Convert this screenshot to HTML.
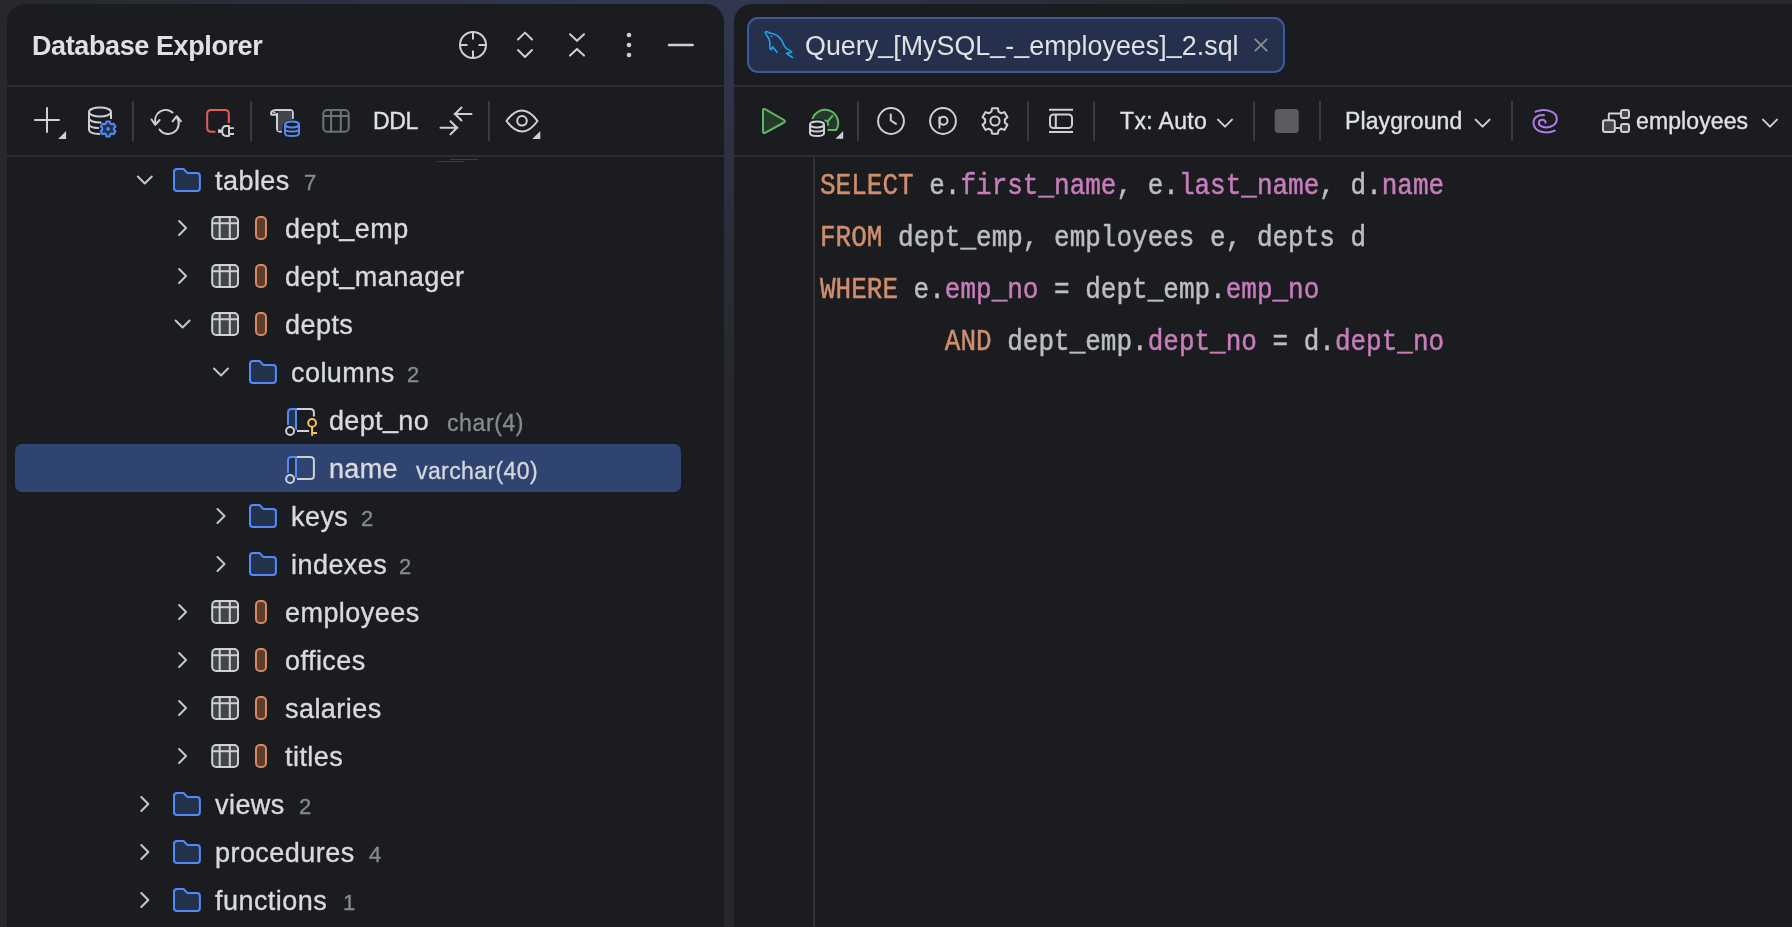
<!DOCTYPE html>
<html><head><meta charset="utf-8">
<style>
*{margin:0;padding:0;box-sizing:border-box}
html,body{width:1792px;height:927px;overflow:hidden}
body{position:relative;background:#26282b;font-family:"Liberation Sans",sans-serif;color:#dfe1e5}
.bgglow{position:absolute;left:0;top:0;width:1792px;height:927px;background:radial-gradient(ellipse 620px 420px at 640px -40px,#323a55 0%,#2e3348 35%,rgba(38,40,43,0) 100%)}
.panel{position:absolute;background:#1b1c1f}
#lp{left:7px;top:4px;width:717px;height:940px;border-radius:18px 18px 0 0}
#rp{left:734px;top:4px;width:1100px;height:940px;border-radius:18px 0 0 0}
.a{position:absolute;white-space:pre}
.hl{position:absolute;height:2px;background:#2b2d30}
svg.ov{position:absolute;left:0;top:0;overflow:visible}
.code{position:absolute;font-family:"Liberation Mono",monospace;font-size:26px;line-height:26px;white-space:pre;color:#bcbec4;transform-origin:0 100%;transform:scaleY(1.1);-webkit-text-stroke:0.45px currentColor}
.kw{color:#cf8e6d}.col{color:#c77dbb}
.a,.code{will-change:transform}
.tx{-webkit-text-stroke:0.35px currentColor}
.us{position:relative;top:-3.5px}

</style></head><body>
<div class="bgglow"></div>
<div class="panel" id="lp"></div>
<div class="panel" id="rp"></div>
<div class="a" style="left:31.7px;top:32.6px;font-weight:bold;font-size:27px;line-height:26px;color:#dfe1e5;letter-spacing:-0.4px">Database Explorer</div>
<div class="hl" style="left:7px;top:85px;width:717px"></div>
<div class="hl" style="left:7px;top:155px;width:717px"></div>
<div class="a" style="left:747px;top:17px;width:538px;height:56px;border:2px solid #3a5a9f;background:#25314c;border-radius:11px"></div>
<div class="a" style="left:805px;top:32.5px;font-size:26.8px;line-height:27px;color:#dfe1e5;letter-spacing:0.05px">Query<span class="us">_</span>[MySQL<span class="us">_</span>-<span class="us">_</span>employees]<span class="us">_</span>2.sql</div>
<div class="hl" style="left:734px;top:85px;width:1060px"></div>
<div class="hl" style="left:734px;top:155px;width:1060px"></div>
<div class="a" style="left:813px;top:157px;width:2px;height:780px;background:#2f3134"></div>
<div class="code" style="left:820px;top:175px"><span class="kw">SELECT</span> e.<span class="col">first_name</span>, e.<span class="col">last_name</span>, d.<span class="col">name</span></div>
<div class="code" style="left:820px;top:227px"><span class="kw">FROM</span> dept_emp, employees e, depts d</div>
<div class="code" style="left:820px;top:279px"><span class="kw">WHERE</span> e.<span class="col">emp_no</span> = dept_emp.<span class="col">emp_no</span></div>
<div class="code" style="left:820px;top:331px">        <span class="kw">AND</span> dept_emp.<span class="col">dept_no</span> = d.<span class="col">dept_no</span></div>

<div class="a" style="left:15px;top:444px;width:666px;height:48px;border-radius:7px;background:#2f4470"></div><div class="a tx" style="left:215px;top:168.14px;font-size:27px;line-height:27px;color:#d8dadf;font-weight:normal;letter-spacing:0.45px;font-family:"Liberation Sans",sans-serif;">tables</div><div class="a tx" style="left:285px;top:216.14px;font-size:27px;line-height:27px;color:#d8dadf;font-weight:normal;letter-spacing:0.45px;font-family:"Liberation Sans",sans-serif;">dept<span style="position:relative;top:-3.5px">_</span>emp</div><div class="a tx" style="left:285px;top:264.14px;font-size:27px;line-height:27px;color:#d8dadf;font-weight:normal;letter-spacing:0.45px;font-family:"Liberation Sans",sans-serif;">dept<span style="position:relative;top:-3.5px">_</span>manager</div><div class="a tx" style="left:285px;top:312.14px;font-size:27px;line-height:27px;color:#d8dadf;font-weight:normal;letter-spacing:0.45px;font-family:"Liberation Sans",sans-serif;">depts</div><div class="a tx" style="left:291px;top:360.14px;font-size:27px;line-height:27px;color:#d8dadf;font-weight:normal;letter-spacing:0.45px;font-family:"Liberation Sans",sans-serif;">columns</div><div class="a tx" style="left:329px;top:408.14px;font-size:27px;line-height:27px;color:#d8dadf;font-weight:normal;letter-spacing:0.35px;font-family:"Liberation Sans",sans-serif;">dept<span style="position:relative;top:-3.5px">_</span>no</div><div class="a tx" style="left:329px;top:456.14px;font-size:27px;line-height:27px;color:#d8dadf;font-weight:normal;letter-spacing:0.35px;font-family:"Liberation Sans",sans-serif;">name</div><div class="a tx" style="left:291px;top:504.14px;font-size:27px;line-height:27px;color:#d8dadf;font-weight:normal;letter-spacing:0.45px;font-family:"Liberation Sans",sans-serif;">keys</div><div class="a tx" style="left:291px;top:552.14px;font-size:27px;line-height:27px;color:#d8dadf;font-weight:normal;letter-spacing:0.45px;font-family:"Liberation Sans",sans-serif;">indexes</div><div class="a tx" style="left:285px;top:600.14px;font-size:27px;line-height:27px;color:#d8dadf;font-weight:normal;letter-spacing:0.45px;font-family:"Liberation Sans",sans-serif;">employees</div><div class="a tx" style="left:285px;top:648.14px;font-size:27px;line-height:27px;color:#d8dadf;font-weight:normal;letter-spacing:0.45px;font-family:"Liberation Sans",sans-serif;">offices</div><div class="a tx" style="left:285px;top:696.14px;font-size:27px;line-height:27px;color:#d8dadf;font-weight:normal;letter-spacing:0.45px;font-family:"Liberation Sans",sans-serif;">salaries</div><div class="a tx" style="left:285px;top:744.14px;font-size:27px;line-height:27px;color:#d8dadf;font-weight:normal;letter-spacing:0.45px;font-family:"Liberation Sans",sans-serif;">titles</div><div class="a tx" style="left:215px;top:792.14px;font-size:27px;line-height:27px;color:#d8dadf;font-weight:normal;letter-spacing:0.45px;font-family:"Liberation Sans",sans-serif;">views</div><div class="a tx" style="left:215px;top:840.14px;font-size:27px;line-height:27px;color:#d8dadf;font-weight:normal;letter-spacing:0.45px;font-family:"Liberation Sans",sans-serif;">procedures</div><div class="a tx" style="left:215px;top:888.14px;font-size:27px;line-height:27px;color:#d8dadf;font-weight:normal;letter-spacing:0.45px;font-family:"Liberation Sans",sans-serif;">functions</div><div class="a tx" style="left:303.5px;top:172.37px;font-size:22px;line-height:22px;color:#868a91;font-weight:normal;letter-spacing:0.0px;font-family:"Liberation Sans",sans-serif;">7</div><div class="a tx" style="left:407px;top:364.37px;font-size:22px;line-height:22px;color:#868a91;font-weight:normal;letter-spacing:0.0px;font-family:"Liberation Sans",sans-serif;">2</div><div class="a tx" style="left:361px;top:508.37px;font-size:22px;line-height:22px;color:#868a91;font-weight:normal;letter-spacing:0.0px;font-family:"Liberation Sans",sans-serif;">2</div><div class="a tx" style="left:399px;top:556.37px;font-size:22px;line-height:22px;color:#868a91;font-weight:normal;letter-spacing:0.0px;font-family:"Liberation Sans",sans-serif;">2</div><div class="a tx" style="left:299px;top:796.37px;font-size:22px;line-height:22px;color:#868a91;font-weight:normal;letter-spacing:0.0px;font-family:"Liberation Sans",sans-serif;">2</div><div class="a tx" style="left:368.5px;top:844.37px;font-size:22px;line-height:22px;color:#868a91;font-weight:normal;letter-spacing:0.0px;font-family:"Liberation Sans",sans-serif;">4</div><div class="a tx" style="left:342.5px;top:892.37px;font-size:22px;line-height:22px;color:#868a91;font-weight:normal;letter-spacing:0.0px;font-family:"Liberation Sans",sans-serif;">1</div><div class="a tx" style="left:447px;top:411.53px;font-size:23px;line-height:23px;color:#868a91;font-weight:normal;letter-spacing:0.6px;font-family:"Liberation Sans",sans-serif;">char(4)</div><div class="a tx" style="left:416px;top:459.53px;font-size:23px;line-height:23px;color:#d3d6dc;font-weight:normal;letter-spacing:0.4px;font-family:"Liberation Sans",sans-serif;">varchar(40)</div><div class="a" style="left:450px;top:159px;width:28px;height:1px;background:#3a3c40"></div><div class="a" style="left:437px;top:161px;width:28px;height:1px;background:#37393d"></div><div class="a tx" style="left:373.3px;top:110.03px;font-size:23px;line-height:23px;color:#dfe1e5;font-weight:normal;letter-spacing:-0.4px;font-family:"Liberation Sans",sans-serif;">DDL</div><div class="a tx" style="left:1119.5px;top:110.13px;font-size:23px;line-height:23px;color:#dfe1e5;font-weight:normal;letter-spacing:0.35px;font-family:"Liberation Sans",sans-serif;">Tx: Auto</div><div class="a tx" style="left:1345px;top:110.13px;font-size:23px;line-height:23px;color:#dfe1e5;font-weight:normal;letter-spacing:0.1px;font-family:"Liberation Sans",sans-serif;">Playground</div><div class="a tx" style="left:1636px;top:109.53px;font-size:23px;line-height:23px;color:#dfe1e5;font-weight:normal;letter-spacing:0.1px;font-family:"Liberation Sans",sans-serif;">employees</div>
<svg class="ov" width="1792" height="927" viewBox="0 0 1792 927">
<path d="M137.8,176.5 L144.8,183.5 L151.8,176.5" fill="none" stroke="#c3c6cc" stroke-width="2" stroke-linecap="round" stroke-linejoin="round"/><path transform="translate(173,168)" d="M4,1 H10.6 L14.3,4.9 H24 Q26.9,4.9 26.9,7.8 V20 Q26.9,22.9 24,22.9 H4 Q1,22.9 1,20 V4 Q1,1 4,1 Z" fill="#25324d" stroke="#548af7" stroke-width="2" stroke-linejoin="round"/><path d="M179.1,221 L186.1,228 L179.1,235" fill="none" stroke="#c3c6cc" stroke-width="2" stroke-linecap="round" stroke-linejoin="round"/><g transform="translate(211,216)"><rect x="1.2" y="1" width="25.8" height="21.9" rx="4" fill="#43454a" stroke="#ced0d6" stroke-width="2"/><path d="M1.2,7.2 H27 M8.7,1 V22.9 M18.8,1 V22.9" stroke="#ced0d6" stroke-width="2" fill="none"/></g><rect x="256" y="217" width="10" height="22" rx="4" fill="#5c3e31" stroke="#dc8858" stroke-width="2"/><path d="M179.1,269 L186.1,276 L179.1,283" fill="none" stroke="#c3c6cc" stroke-width="2" stroke-linecap="round" stroke-linejoin="round"/><g transform="translate(211,264)"><rect x="1.2" y="1" width="25.8" height="21.9" rx="4" fill="#43454a" stroke="#ced0d6" stroke-width="2"/><path d="M1.2,7.2 H27 M8.7,1 V22.9 M18.8,1 V22.9" stroke="#ced0d6" stroke-width="2" fill="none"/></g><rect x="256" y="265" width="10" height="22" rx="4" fill="#5c3e31" stroke="#dc8858" stroke-width="2"/><path d="M175.6,320.5 L182.6,327.5 L189.6,320.5" fill="none" stroke="#c3c6cc" stroke-width="2" stroke-linecap="round" stroke-linejoin="round"/><g transform="translate(211,312)"><rect x="1.2" y="1" width="25.8" height="21.9" rx="4" fill="#43454a" stroke="#ced0d6" stroke-width="2"/><path d="M1.2,7.2 H27 M8.7,1 V22.9 M18.8,1 V22.9" stroke="#ced0d6" stroke-width="2" fill="none"/></g><rect x="256" y="313" width="10" height="22" rx="4" fill="#5c3e31" stroke="#dc8858" stroke-width="2"/><path d="M214,368.5 L221,375.5 L228,368.5" fill="none" stroke="#c3c6cc" stroke-width="2" stroke-linecap="round" stroke-linejoin="round"/><path transform="translate(249,360)" d="M4,1 H10.6 L14.3,4.9 H24 Q26.9,4.9 26.9,7.8 V20 Q26.9,22.9 24,22.9 H4 Q1,22.9 1,20 V4 Q1,1 4,1 Z" fill="#25324d" stroke="#548af7" stroke-width="2" stroke-linejoin="round"/><g transform="translate(287,408)"><path d="M10,1 H23.4 Q26.9,1 26.9,4.5 V8.6" fill="none" stroke="#ced0d6" stroke-width="2"/><path d="M10,23 H22" fill="none" stroke="#ced0d6" stroke-width="2"/><path d="M9,22 V1 H4.5 Q1,1 1,4.5 V17" fill="#25324d" stroke="#548af7" stroke-width="2"/><circle cx="3.1" cy="23" r="5.6" fill="#1b1c1f"/><circle cx="3.1" cy="23" r="4" fill="none" stroke="#ced0d6" stroke-width="2"/><circle cx="25.1" cy="15" r="6.2" fill="#1b1c1f"/><circle cx="25.1" cy="14.9" r="3.9" fill="none" stroke="#f2c55c" stroke-width="2"/><path d="M25.1,18.8 V27.8 M25.1,25 H30" fill="none" stroke="#f2c55c" stroke-width="2"/></g><g transform="translate(287,456)"><path d="M10,1 H23.4 Q26.9,1 26.9,4.5 V19.5 Q26.9,23 23.4,23 H10" fill="none" stroke="#ced0d6" stroke-width="2"/><path d="M9,22 V1 H4.5 Q1,1 1,4.5 V17" fill="#25324d" stroke="#548af7" stroke-width="2"/><circle cx="3.1" cy="23" r="5.6" fill="#2f4470"/><circle cx="3.1" cy="23" r="4" fill="none" stroke="#ced0d6" stroke-width="2"/></g><path d="M217.5,509 L224.5,516 L217.5,523" fill="none" stroke="#c3c6cc" stroke-width="2" stroke-linecap="round" stroke-linejoin="round"/><path transform="translate(249,504)" d="M4,1 H10.6 L14.3,4.9 H24 Q26.9,4.9 26.9,7.8 V20 Q26.9,22.9 24,22.9 H4 Q1,22.9 1,20 V4 Q1,1 4,1 Z" fill="#25324d" stroke="#548af7" stroke-width="2" stroke-linejoin="round"/><path d="M217.5,557 L224.5,564 L217.5,571" fill="none" stroke="#c3c6cc" stroke-width="2" stroke-linecap="round" stroke-linejoin="round"/><path transform="translate(249,552)" d="M4,1 H10.6 L14.3,4.9 H24 Q26.9,4.9 26.9,7.8 V20 Q26.9,22.9 24,22.9 H4 Q1,22.9 1,20 V4 Q1,1 4,1 Z" fill="#25324d" stroke="#548af7" stroke-width="2" stroke-linejoin="round"/><path d="M179.1,605 L186.1,612 L179.1,619" fill="none" stroke="#c3c6cc" stroke-width="2" stroke-linecap="round" stroke-linejoin="round"/><g transform="translate(211,600)"><rect x="1.2" y="1" width="25.8" height="21.9" rx="4" fill="#43454a" stroke="#ced0d6" stroke-width="2"/><path d="M1.2,7.2 H27 M8.7,1 V22.9 M18.8,1 V22.9" stroke="#ced0d6" stroke-width="2" fill="none"/></g><rect x="256" y="601" width="10" height="22" rx="4" fill="#5c3e31" stroke="#dc8858" stroke-width="2"/><path d="M179.1,653 L186.1,660 L179.1,667" fill="none" stroke="#c3c6cc" stroke-width="2" stroke-linecap="round" stroke-linejoin="round"/><g transform="translate(211,648)"><rect x="1.2" y="1" width="25.8" height="21.9" rx="4" fill="#43454a" stroke="#ced0d6" stroke-width="2"/><path d="M1.2,7.2 H27 M8.7,1 V22.9 M18.8,1 V22.9" stroke="#ced0d6" stroke-width="2" fill="none"/></g><rect x="256" y="649" width="10" height="22" rx="4" fill="#5c3e31" stroke="#dc8858" stroke-width="2"/><path d="M179.1,701 L186.1,708 L179.1,715" fill="none" stroke="#c3c6cc" stroke-width="2" stroke-linecap="round" stroke-linejoin="round"/><g transform="translate(211,696)"><rect x="1.2" y="1" width="25.8" height="21.9" rx="4" fill="#43454a" stroke="#ced0d6" stroke-width="2"/><path d="M1.2,7.2 H27 M8.7,1 V22.9 M18.8,1 V22.9" stroke="#ced0d6" stroke-width="2" fill="none"/></g><rect x="256" y="697" width="10" height="22" rx="4" fill="#5c3e31" stroke="#dc8858" stroke-width="2"/><path d="M179.1,749 L186.1,756 L179.1,763" fill="none" stroke="#c3c6cc" stroke-width="2" stroke-linecap="round" stroke-linejoin="round"/><g transform="translate(211,744)"><rect x="1.2" y="1" width="25.8" height="21.9" rx="4" fill="#43454a" stroke="#ced0d6" stroke-width="2"/><path d="M1.2,7.2 H27 M8.7,1 V22.9 M18.8,1 V22.9" stroke="#ced0d6" stroke-width="2" fill="none"/></g><rect x="256" y="745" width="10" height="22" rx="4" fill="#5c3e31" stroke="#dc8858" stroke-width="2"/><path d="M141.3,797 L148.3,804 L141.3,811" fill="none" stroke="#c3c6cc" stroke-width="2" stroke-linecap="round" stroke-linejoin="round"/><path transform="translate(173,792)" d="M4,1 H10.6 L14.3,4.9 H24 Q26.9,4.9 26.9,7.8 V20 Q26.9,22.9 24,22.9 H4 Q1,22.9 1,20 V4 Q1,1 4,1 Z" fill="#25324d" stroke="#548af7" stroke-width="2" stroke-linejoin="round"/><path d="M141.3,845 L148.3,852 L141.3,859" fill="none" stroke="#c3c6cc" stroke-width="2" stroke-linecap="round" stroke-linejoin="round"/><path transform="translate(173,840)" d="M4,1 H10.6 L14.3,4.9 H24 Q26.9,4.9 26.9,7.8 V20 Q26.9,22.9 24,22.9 H4 Q1,22.9 1,20 V4 Q1,1 4,1 Z" fill="#25324d" stroke="#548af7" stroke-width="2" stroke-linejoin="round"/><path d="M141.3,893 L148.3,900 L141.3,907" fill="none" stroke="#c3c6cc" stroke-width="2" stroke-linecap="round" stroke-linejoin="round"/><path transform="translate(173,888)" d="M4,1 H10.6 L14.3,4.9 H24 Q26.9,4.9 26.9,7.8 V20 Q26.9,22.9 24,22.9 H4 Q1,22.9 1,20 V4 Q1,1 4,1 Z" fill="#25324d" stroke="#548af7" stroke-width="2" stroke-linejoin="round"/><circle cx="473" cy="45" r="13" stroke="#ced0d6" stroke-width="2" fill="none" stroke-linecap="round" stroke-linejoin="round"/><path d="M473,32 V39.5 M473,50.5 V58 M460,45 H467.5 M478.5,45 H486" stroke="#ced0d6" stroke-width="2" fill="none"/><path d="M518,39.5 L525,32.6 L532,39.5 M518,50 L525,57 L532,50" stroke="#ced0d6" stroke-width="2" fill="none" stroke-linecap="round" stroke-linejoin="round"/><path d="M570,34.2 L577,40.8 L584,34.2 M570,55.6 L577,49 L584,55.6" stroke="#ced0d6" stroke-width="2" fill="none" stroke-linecap="round" stroke-linejoin="round"/><circle cx="629" cy="35" r="2.3" fill="#ced0d6"/><circle cx="629" cy="45" r="2.3" fill="#ced0d6"/><circle cx="629" cy="55" r="2.3" fill="#ced0d6"/><rect x="667.8" y="43.8" width="26" height="2.4" rx="1" fill="#ced0d6"/><path d="M35,120 H59 M47,108 V132" stroke="#ced0d6" stroke-width="2" fill="none" stroke-linecap="round"/><path d="M58.1,138.9 L66.1,130.9 L66.1,138.9 Z" fill="#ced0d6"/><path d="M89,112 V129.5 Q89,133.6 99.5,134" stroke="#ced0d6" stroke-width="2" fill="none" stroke-linecap="round" stroke-linejoin="round"/><ellipse cx="100" cy="112" rx="11" ry="4.6" stroke="#ced0d6" stroke-width="2" fill="none"/><path d="M111,112 V119" stroke="#ced0d6" stroke-width="2" fill="none"/><path d="M89,118.5 Q90,122.2 100.5,122.6 M89,124.5 Q90,127.8 98.2,128.1" stroke="#ced0d6" stroke-width="2" fill="none" stroke-linecap="round" stroke-linejoin="round"/><path d="M106.34,121.40 L109.86,121.40 L110.18,123.38 L111.84,124.34 L113.71,123.63 L115.47,126.67 L113.92,127.94 L113.92,129.86 L115.47,131.13 L113.71,134.17 L111.84,133.46 L110.18,134.42 L109.86,136.40 L106.34,136.40 L106.02,134.42 L104.36,133.46 L102.49,134.17 L100.73,131.13 L102.28,129.86 L102.28,127.94 L100.73,126.67 L102.49,123.63 L104.36,124.34 L106.02,123.38 Z" fill="#25324d" stroke="#548af7" stroke-width="2" stroke-linejoin="round"/><circle cx="108.1" cy="128.9" r="1.8" fill="#548af7"/><rect x="132" y="101" width="2" height="40" fill="#393b40"/><path d="M172.5,112.5 A10.5,10.5 0 0 0 155.6,123.5" stroke="#ced0d6" stroke-width="2" fill="none" stroke-linecap="round" stroke-linejoin="round"/><path d="M151.5,119.5 L155.3,124.8 L159.6,120" stroke="#ced0d6" stroke-width="2" fill="none" stroke-linecap="round" stroke-linejoin="round"/><path d="M159.5,129.5 A10.5,10.5 0 0 0 176.8,117.2" stroke="#ced0d6" stroke-width="2" fill="none" stroke-linecap="round" stroke-linejoin="round"/><path d="M172.6,121.3 L176.8,116.2 L181,121.3" stroke="#ced0d6" stroke-width="2" fill="none" stroke-linecap="round" stroke-linejoin="round"/><path d="M215.5,131.8 H211.2 Q207.2,131.8 207.2,127.8 V114.1 Q207.2,110.1 211.2,110.1 H224.8 Q228.8,110.1 228.8,114.1 V123" stroke="#e55c5c" stroke-width="2" fill="none"/><path d="M229,126 H226.2 Q222.2,126 222.2,131 Q222.2,136 226.2,136 H229 Z" stroke="#ced0d6" stroke-width="1.9" fill="#1b1c1f" stroke-linejoin="round"/><path d="M229,128.1 H234 M229,134 H234" stroke="#ced0d6" stroke-width="1.9" fill="none"/><rect x="218" y="129.4" width="4" height="3.4" fill="#ced0d6"/><rect x="250" y="101" width="2" height="40" fill="#393b40"/><path d="M277,113 V128.5 Q277,131.8 281.8,131.8 M275.5,110 H289.7 Q292.8,110 292.8,113.1 V119" stroke="#ced0d6" stroke-width="2" fill="none"/><path d="M278,111 H291.8 V123 L284,123 V131 H278 Z" fill="#43454a"/><path d="M277,110 Q271,110 271,113.5 Q271,114.8 273,114.8 H277" stroke="#ced0d6" stroke-width="2" fill="none"/><path d="M272.5,113.2 L274.6,111.2 L276.2,113.2 Z" fill="#ced0d6"/><rect x="282.5" y="120" width="19" height="18" rx="7" fill="#1b1c1f"/><path d="M285,124.5 V133.5 Q285,136 292,136 Q299,136 299,133.5 V124.5" stroke="#548af7" stroke-width="2" fill="none"/><ellipse cx="292" cy="124.5" rx="7" ry="2.9" stroke="#548af7" stroke-width="2" fill="none"/><path d="M285,129 Q285,131.6 292,131.6 Q299,131.6 299,129" stroke="#548af7" stroke-width="2" fill="none"/><rect x="323.3" y="110.1" width="25.4" height="21.7" rx="4" stroke="#6f7276" stroke-width="2" fill="none"/><path d="M323.3,116 H348.7 M331.1,110.1 V131.8 M340.8,110.1 V131.8" stroke="#6f7276" stroke-width="2" fill="none"/><path d="M454.5,114 H471.5 M461.5,107.5 L455,114 L461.5,120.5" stroke="#ced0d6" stroke-width="2" fill="none" stroke-linecap="round" stroke-linejoin="round"/><path d="M440.5,127.7 H457.5 M450.5,121.2 L457,127.7 L450.5,134.2" stroke="#ced0d6" stroke-width="2" fill="none" stroke-linecap="round" stroke-linejoin="round"/><rect x="488" y="101" width="2" height="40" fill="#393b40"/><path d="M506.5,121 Q514,110.5 522,110.5 Q530,110.5 537.5,121 Q530,131.5 522,131.5 Q514,131.5 506.5,121 Z" stroke="#ced0d6" stroke-width="2" fill="none" stroke-linejoin="round"/><circle cx="522" cy="120.8" r="4.8" stroke="#ced0d6" stroke-width="2" fill="none"/><path d="M532.3,139 L540.3,131 L540.3,139 Z" fill="#ced0d6"/><path d="M763,110.5 V131.5 Q763,134 765.5,132.6 L784,122.5 Q786,121.2 784,120 L765.5,109.4 Q763,108 763,110.5 Z" fill="#253a2a" stroke="#5fb865" stroke-width="2" stroke-linejoin="round"/><path d="M812.25,119.58 A13.2,13.2 0 1 1 836.19,130 H827 V121 Z" fill="#253a2a"/><path d="M812.25,119.58 A13.2,13.2 0 1 1 836.19,130 H827.2" stroke="#5fb865" stroke-width="2" fill="none"/><path d="M827.5,121.5 L832.5,115.8 M825,120.5 L827.5,121.5 L828,125" stroke="#5fb865" stroke-width="2" fill="none" stroke-linecap="round"/><rect x="806.5" y="119" width="21" height="20" rx="8" fill="#1b1c1f"/><path d="M810,124.5 V133 Q810,136 817,136 Q824,136 824,133 V124.5" stroke="#ced0d6" stroke-width="2" fill="none"/><ellipse cx="817" cy="124.5" rx="7" ry="2.9" stroke="#ced0d6" stroke-width="2" fill="none"/><path d="M810,128.8 Q810,131.6 817,131.6 Q824,131.6 824,128.8" stroke="#ced0d6" stroke-width="2" fill="none"/><path d="M835.4,138.8 L843.2,131 L843.2,138.8 Z" fill="#ced0d6"/><rect x="857" y="101" width="2" height="40" fill="#393b40"/><circle cx="891" cy="121" r="12.9" stroke="#ced0d6" stroke-width="2" fill="none"/><path d="M890.8,114.5 V120.5 L896,123.8" stroke="#ced0d6" stroke-width="2" fill="none" stroke-linecap="round" stroke-linejoin="round"/><circle cx="943" cy="121" r="12.9" stroke="#ced0d6" stroke-width="2" fill="none"/><path d="M939.5,116.5 V128.5" stroke="#ced0d6" stroke-width="2" fill="none"/><circle cx="943.5" cy="120.8" r="4" stroke="#ced0d6" stroke-width="2" fill="none"/><path d="M992.03,108.34 L997.97,108.34 L998.52,111.64 L1001.34,113.27 L1004.48,112.10 L1007.45,117.24 L1004.87,119.37 L1004.87,122.63 L1007.45,124.76 L1004.48,129.90 L1001.34,128.73 L998.52,130.36 L997.97,133.66 L992.03,133.66 L991.48,130.36 L988.66,128.73 L985.52,129.90 L982.55,124.76 L985.13,122.63 L985.13,119.37 L982.55,117.24 L985.52,112.10 L988.66,113.27 L991.48,111.64 Z" stroke="#ced0d6" stroke-width="2" fill="none" stroke-linejoin="round"/><circle cx="995" cy="121" r="4.6" stroke="#ced0d6" stroke-width="2" fill="none"/><rect x="1027" y="101" width="2" height="40" fill="#393b40"/><path d="M1049,109.8 H1073 M1049,132 H1073" stroke="#ced0d6" stroke-width="2" fill="none"/><rect x="1050" y="114.5" width="22" height="13.5" rx="3.5" stroke="#ced0d6" stroke-width="2" fill="none"/><path d="M1055.8,114.5 V128" stroke="#ced0d6" stroke-width="2" fill="none"/><rect x="1093" y="101" width="2" height="40" fill="#393b40"/><path d="M1218,119.6 L1225,126.6 L1232,119.6" fill="none" stroke="#ced0d6" stroke-width="2" stroke-linecap="round" stroke-linejoin="round"/><rect x="1253" y="101" width="2" height="40" fill="#393b40"/><rect x="1274.7" y="109" width="24" height="24" rx="3.5" fill="#5b5c5f"/><rect x="1319" y="101" width="2" height="40" fill="#393b40"/><path d="M1475.6,119.6 L1482.6,126.6 L1489.6,119.6" fill="none" stroke="#ced0d6" stroke-width="2" stroke-linecap="round" stroke-linejoin="round"/><rect x="1511" y="101" width="2" height="40" fill="#393b40"/><path d="M1535.5,111.6 C1544,108.2 1556.8,110.5 1556.8,119.2 C1556.8,126.5 1546,129 1541,126.2 C1537.2,124 1538.8,119.6 1542.5,119.8 C1545,120 1546.2,121.6 1545.4,122.6" stroke="#b07ee8" stroke-width="2" fill="none" stroke-linecap="round"/><path d="M1554.8,130.6 C1548,133.6 1536,133.4 1533.8,125 C1532,117.8 1538.5,114.5 1544,115.2" stroke="#b07ee8" stroke-width="2" fill="none" stroke-linecap="round"/><path d="M1608.8,120 V114 Q1608.8,113.6 1609.5,113.6 H1621 M1615.5,128 H1621" stroke="#ced0d6" stroke-width="2" fill="none"/><rect x="1603" y="120.3" width="11.8" height="11.8" rx="2" fill="#43454a" stroke="#ced0d6" stroke-width="2"/><rect x="1621" y="110" width="8" height="8" rx="2" fill="#43454a" stroke="#ced0d6" stroke-width="2"/><rect x="1621" y="124" width="8" height="8" rx="2" fill="#43454a" stroke="#ced0d6" stroke-width="2"/><path d="M1763,119.6 L1770,126.6 L1777,119.6" fill="none" stroke="#ced0d6" stroke-width="2" stroke-linecap="round" stroke-linejoin="round"/><path d="M765.3,32.5 C766,31 768,31.8 769.4,32.9 C771,33.4 773.5,33.6 775.9,34.9 C779,36.6 781.5,39.5 783,43 C784,45.5 784.5,47.5 786.5,48.6 C788.5,49.6 791,50.5 791.7,52.2 L786.6,53.3 L792.5,57.6 M765.3,32.5 C766.5,35 768.2,37.5 769.2,39.8 C770,41.5 770.4,42.5 769.9,44.5 C769.6,46 769.6,48 770.3,49.2 C770.8,50 771.5,50.2 772.6,46.8 L777,52.3" stroke="#1ea8ea" stroke-width="1.6" fill="none" stroke-linejoin="round" stroke-linecap="round"/><circle cx="771.5" cy="36.4" r="0.9" fill="#1ea8ea"/><path d="M1254.8,38.8 L1267.2,51.2 M1267.2,38.8 L1254.8,51.2" stroke="#8c8f94" stroke-width="1.7" fill="none"/>

</svg>
</body></html>
